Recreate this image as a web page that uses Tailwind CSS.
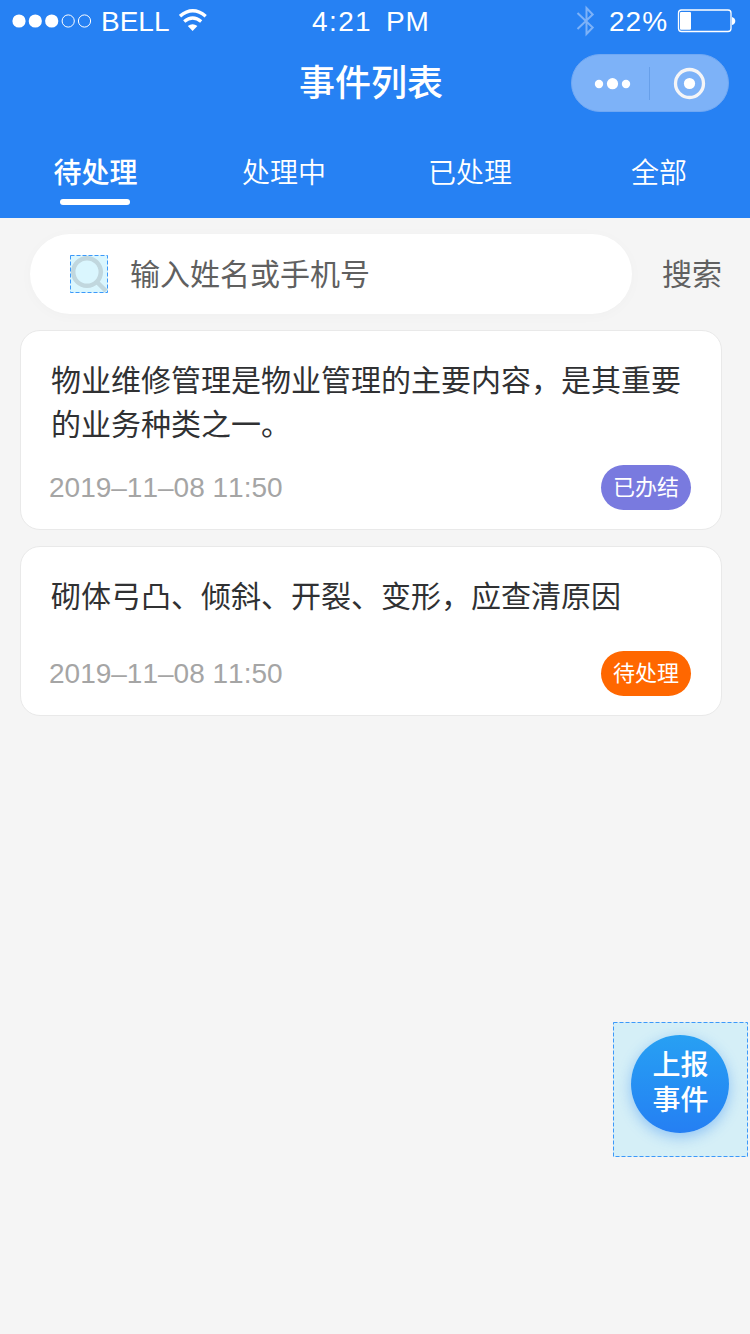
<!DOCTYPE html>
<html lang="zh-CN">
<head>
<meta charset="utf-8">
<title>事件列表</title>
<script src="https://cdn.jsdelivr.net/npm/@tailwindcss/browser@4"></script>
</head>
<body class="bg-[#f5f5f5] font-['Noto_Sans_CJK_SC',sans-serif]">
<div class="relative w-[750px] h-[1334px] overflow-hidden flex flex-col">
  <header class="h-[218px] bg-[#2681f3] text-white flex flex-col shrink-0">
    <div class="h-[42px] flex items-center font-['Liberation_Sans',sans-serif] text-[28px] leading-[42px] whitespace-nowrap">
      <svg class="ml-3 w-[80px] h-[42px] shrink-0" viewBox="12 0 80 42" fill="#fff"><circle cx="19" cy="21" r="6.6"/><circle cx="35.3" cy="21" r="6.6"/><circle cx="51.7" cy="21" r="6.6"/><g fill="none" stroke="#fff" stroke-width="1"><circle cx="68.2" cy="21" r="6.1"/><circle cx="84.5" cy="21" r="6.1"/></g></svg>
      <span class="ml-[9px] w-[78px] pt-[2px]">BELL</span>
      <svg class="w-[28px] h-[42px] shrink-0" viewBox="179 0 28 42" fill="none" stroke="#fff" stroke-width="3.4"><path d="M180 16.2Q192.700 5.400 205.700 16.200M184.200 21.500Q192.700 14.700 201.200 21.500"/><path d="M187.800 26Q192.600 22.300 197.400 26L192.600 31Z" fill="#fff" stroke="none"/></svg>
      <span class="ml-[105px] w-[74px] pt-px tracking-[1.4px]">4:21</span>
      <span class="w-[190px] pt-px tracking-[.8px]">PM</span>
      <svg class="w-[20px] h-[42px] shrink-0" viewBox="576 0 20 42" fill="none" stroke="#7db2f8" stroke-width="2"><path d="M577.500 13L592.700 27.500L586.500 34V8L592.700 14.500L577.500 29"/></svg>
      <span class="ml-[13px] w-[68px] pt-[2px] tracking-[1px]">22%</span>
      <svg class="w-[60px] h-[42px] shrink-0" viewBox="677 0 60 42"><rect x="678.500" y="10" width="52.500" height="21.500" rx="3" fill="none" stroke="#fff" stroke-width="1.300"/><rect x="680" y="12" width="11" height="17.700" rx="1" fill="#fff"/><path d="M732 17Q735.300 18 735.300 21T732 25Z" fill="#fff"/></svg>
    </div>
    <div class="h-[82px] grid grid-cols-[300px_271px_158px] items-center">
      <h1 class="col-start-2 text-[36px] leading-[52px] font-medium -ml-[1px] pb-[6px]">事件列表</h1>
      <svg class="w-[158px] h-[58px]" viewBox="571 54 158 58"><rect x="571.500" y="54.500" width="157" height="57" rx="28.500" fill="#7db2f8" stroke="#70a8f3"/><g fill="#fff"><circle cx="599" cy="84" r="4.200"/><circle cx="612.500" cy="83.700" r="5.600"/><circle cx="626" cy="84" r="4.200"/><circle cx="689.500" cy="83.500" r="5.600"/></g><path d="M649.500 67V100" stroke="#679fe9"/><circle cx="689.500" cy="83.500" r="14" fill="none" stroke="#f5f5f7" stroke-width="3.300"/></svg>
    </div>
    <nav class="flex-1 flex text-[28px] leading-[40px] pt-[27px] text-center">
      <div class="w-[192px] flex flex-col items-center font-medium"><span>待处理</span><i class="block w-[70px] h-[6px] rounded-full bg-white mt-[8px] -ml-px"></i></div>
      <div class="w-[184px] pl-[3px] font-[350]">处理中</div>
      <div class="w-[188px] pl-[5px] font-[350]">已处理</div>
      <div class="w-[190px] pl-[7px] font-[350]">全部</div>
    </nav>
  </header>
  <section class="flex items-center mt-4 ml-[30px] h-[80px] text-[30px] text-[#606060] shrink-0">
    <div class="w-[602px] h-[80px] rounded-full bg-white shadow-[0_2px_14px_rgba(0,0,0,0.025)] flex items-center pl-[40px]">
      <svg class="w-[38px] h-[38px]" viewBox="0 0 38 38"><path fill="#daf6fe" d="M0 0H38V38H0z"/><g fill="none" stroke="#c1d7de" stroke-width="4.500"><circle cx="17" cy="17" r="13.800"/><path d="M26.500 26.500L36 36"/></g><rect x=".5" y=".5" width="37" height="37" fill="none" stroke="#3c99fa" stroke-dasharray="4 2"/></svg>
      <span class="ml-[22px] pb-[4px]">输入姓名或手机号</span>
    </div>
    <span class="ml-[30px] pb-[4px]">搜索</span>
  </section>
  <main class="mt-4 ml-5 w-[702px] flex flex-col gap-4">
    <article class="h-[200px] bg-white border border-[#e9e9e9] rounded-[20px] pt-[25px] px-[30px]">
      <p class="text-[30px] leading-[44px] h-[92px] text-[#303133] whitespace-nowrap">物业维修管理是物业管理的主要内容，是其重要<br>的业务种类之一。</p>
      <div class="mt-[17px] h-[45px] flex items-center justify-between">
        <time class="font-['Liberation_Sans',sans-serif] [font-kerning:none] text-[28px] text-[#a5a5a5] -ml-[2px] pt-px">2019–11–08 11:50</time>
        <span class="w-[90px] h-[45px] rounded-full bg-[#797adf] text-white text-[22px] leading-[41px] text-center">已办结</span>
      </div>
    </article>
    <article class="h-[170px] bg-white border border-[#e9e9e9] rounded-[20px] pt-[25px] px-[30px]">
      <p class="text-[30px] leading-[44px] h-[62px] text-[#303133] whitespace-nowrap">砌体弓凸、倾斜、开裂、变形，应查清原因</p>
      <div class="mt-[17px] h-[45px] flex items-center justify-between">
        <time class="font-['Liberation_Sans',sans-serif] [font-kerning:none] text-[28px] text-[#a5a5a5] -ml-[2px] pt-px">2019–11–08 11:50</time>
        <span class="w-[90px] h-[45px] rounded-full bg-[#ff6700] text-white text-[22px] leading-[41px] text-center">待处理</span>
      </div>
    </article>
  </main>
  <div class="absolute left-[613px] top-[1022px] w-[135px] h-[135px] bg-[#d5eff7] pl-[18px] pt-[13px]">
    <svg class="absolute inset-0 w-[135px] h-[135px]"><rect x=".5" y=".5" width="134" height="134" fill="none" stroke="#3c99fa" stroke-dasharray="4 2"/></svg>
    <button class="w-[98px] h-[98px] rounded-full bg-linear-to-b from-[#28a0f3] to-[#257ff3] shadow-[0_4px_14px_rgba(38,129,243,0.4)] text-white font-medium text-[28px] leading-[35px] pb-[6px] pl-px flex items-center justify-center">上报<br>事件</button>
  </div>
</div>
</body>
</html>
